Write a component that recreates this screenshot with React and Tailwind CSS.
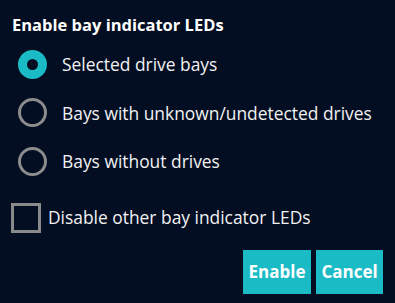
import React from "react";

function Radio({ checked, label }) {
  return (
    <div className="flex items-center h-[48.5px]">
      <div className="w-[62px] flex justify-center pl-[2px]">
        {checked ? (
          <div className="w-[29px] h-[29px] rounded-full bg-[#1bbbc6] flex items-center justify-center">
            <div className="w-[11px] h-[11px] rounded-full bg-[#030e22]" />
          </div>
        ) : (
          <div className="w-[29px] h-[29px] rounded-full border-[3px] border-[#8c8c8c]" />
        )}
      </div>
      <span className="text-[17.4px] text-[#f2f2f2] whitespace-nowrap">{label}</span>
    </div>
  );
}

export default function App() {
  return (
    <div
      className="w-[395px] h-[303px] bg-[#030e22] text-white overflow-hidden"
      style={{ fontFamily: '"Open Sans", "Noto Sans", sans-serif' }}
    >
      <div className="pl-[12px] pt-[14px] text-[16.5px] font-bold leading-[22px]">
        Enable bay indicator LEDs
      </div>
      <div className="pt-[4px] flex flex-col">
        <Radio checked label="Selected drive bays" />
        <Radio label="Bays with unknown/undetected drives" />
        <Radio label="Bays without drives" />
      </div>
      <div className="flex items-center pl-[11px] mt-[17px] h-[30px]">
        <div className="w-[30px] h-[30px] border-[3px] border-[#8a8a8a]" />
        <span className="ml-[7px] text-[17.4px] text-[#f2f2f2] whitespace-nowrap">
          Disable other bay indicator LEDs
        </span>
      </div>
      <div className="flex justify-end gap-[5px] pr-[12px] mt-[17px]">
        <button className="w-[68px] h-[44px] bg-[#1bbbc6] text-white font-bold text-[17px]">
          Enable
        </button>
        <button className="w-[67px] h-[44px] bg-[#1bbbc6] text-white font-bold text-[17px]">
          Cancel
        </button>
      </div>
    </div>
  );
}
